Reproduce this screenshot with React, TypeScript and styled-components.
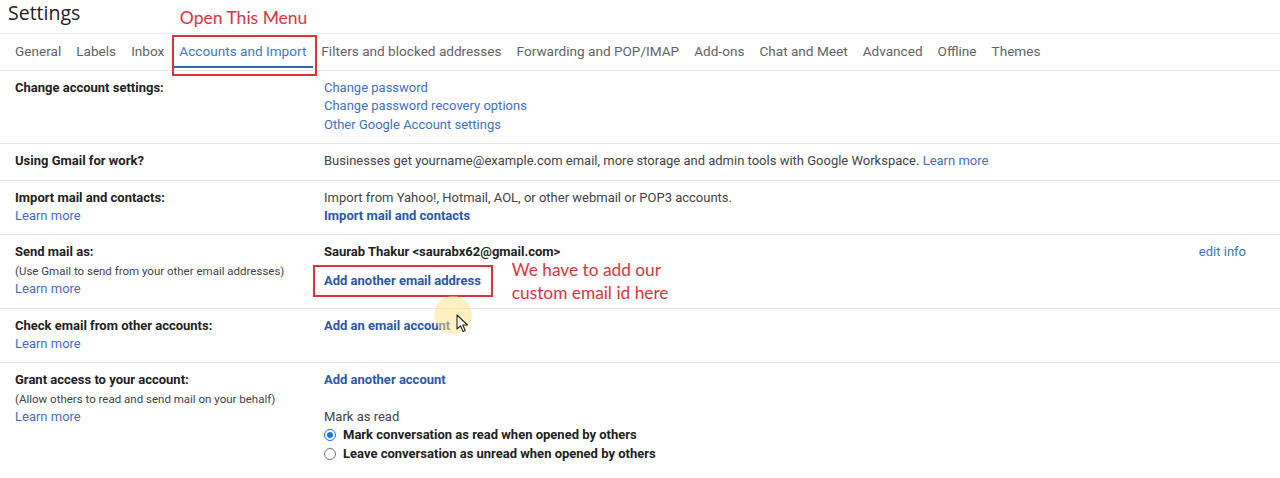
import React from "react";
import styled, { createGlobalStyle, css } from "styled-components";

const GlobalStyle = createGlobalStyle`
  html, body { margin: 0; padding: 0; background: #ffffff; }
  body { font-family: Roboto, "Liberation Sans", Arial, sans-serif; font-size: 13px; color: #222; }
  * { box-sizing: border-box; }
`;

const RED = "#d9343c";

const Page = styled.div`
  width: 1280px;
  height: 478px;
  overflow: hidden;
  background: #fff;
`;

const Header = styled.div`
  height: 34px;
  padding: 1px 0 0 8px;
  display: flex;
  align-items: flex-start;
  border-bottom: 1px solid #efefef;
`;

const Title = styled.h1`
  margin: 0;
  font-family: "Open Sans", Roboto, sans-serif;
  font-weight: 400;
  font-size: 19.5px;
  color: #202124;
  line-height: 24px;
`;

const TabBar = styled.nav`
  height: 37px;
  display: flex;
  padding: 0 0 2px 7.5px;
  border-bottom: 1px solid #e8e8e8;
`;

const Tab = styled.div<{ $active?: boolean }>`
  position: relative;
  display: flex;
  align-items: center;
  padding: 0 7.5px;
  font-family: Roboto, "Open Sans", sans-serif;
  font-size: 13.6px;
  color: #626366;
  white-space: nowrap;
  ${(p) =>
    p.$active &&
    css`
      color: #3f79c6;
      &::after {
        content: "";
        position: absolute;
        left: 2px;
        right: 1px;
        bottom: 0;
        height: 2px;
        background: #3366b0;
      }
    `}
`;

const CalloutBox = styled.span`
  position: absolute;
  left: 0;
  right: -3px;
  top: 1px;
  bottom: -8px;
  border: 2px solid ${RED};
  pointer-events: none;
`;

const CalloutText = styled.span`
  position: absolute;
  left: 8px;
  top: -27px;
  font-family: Lato, "Open Sans", sans-serif;
  font-size: 17.5px;
  color: ${RED};
  white-space: nowrap;
`;

const Row = styled.section<{ $last?: boolean }>`
  position: relative;
  display: grid;
  grid-template-columns: 309px 1fr auto;
  padding: 8px 34px 9px 15px;
  line-height: 18.4px;
  border-bottom: ${(p) => (p.$last ? "none" : "1px solid #e6e6e6")};
`;

const LabelCell = styled.div`
  display: flex;
  flex-direction: column;
`;

const Label = styled.span`
  font-weight: 700;
  color: #222;
`;

const Hint = styled.span`
  font-size: 11.5px;
  color: #444;
`;

const ValueCell = styled.div`
  display: flex;
  flex-direction: column;
  align-items: flex-start;
`;

const Text = styled.span<{ $bold?: boolean }>`
  color: ${(p) => (p.$bold ? "#222" : "#444")};
  font-weight: ${(p) => (p.$bold ? 700 : 400)};
`;

const Link = styled.a<{ $bold?: boolean }>`
  color: ${(p) => (p.$bold ? "#2b58a8" : "#4271c0")};
  font-weight: ${(p) => (p.$bold ? 700 : 400)};
  text-decoration: none;
  cursor: pointer;
`;

const ActionCell = styled.div`
  display: flex;
  flex-direction: column;
  align-items: flex-end;
`;

const CalloutRow = styled.div`
  display: flex;
  align-items: center;
  gap: 19px;
  margin-top: 3px;
  margin-left: -11px;
`;

const BoxedLink = styled.div`
  border: 2px solid ${RED};
  padding: 5px 10px 5px 9px;
  line-height: 18px;
`;

const Note = styled.div`
  font-family: Lato, "Open Sans", sans-serif;
  font-size: 17.3px;
  line-height: 23px;
  margin: -7px 0;
  color: ${RED};
`;

const Spacer = styled.div`
  height: 18px;
`;

const RadioLine = styled.label`
  display: flex;
  align-items: center;
  gap: 7px;
  font-weight: 700;
  color: #222;
`;

const Radio = styled.span<{ $checked?: boolean }>`
  width: 12px;
  height: 12px;
  border-radius: 50%;
  border: 1px solid ${(p) => (p.$checked ? "#1a73e8" : "#767676")};
  display: inline-flex;
  align-items: center;
  justify-content: center;
  background: #fff;
  ${(p) =>
    p.$checked &&
    css`
      &::after {
        content: "";
        width: 6px;
        height: 6px;
        border-radius: 50%;
        background: #1a73e8;
      }
    `}
`;

const Halo = styled.span`
  position: absolute;
  left: 434px;
  top: -13px;
  width: 38px;
  height: 38px;
  border-radius: 50%;
  background: rgba(253, 226, 130, 0.5);
  pointer-events: none;
`;

const Pointer = styled.svg`
  position: absolute;
  left: 456px;
  top: 5px;
  pointer-events: none;
`;

const tabs = [
  "General",
  "Labels",
  "Inbox",
  "Accounts and Import",
  "Filters and blocked addresses",
  "Forwarding and POP/IMAP",
  "Add-ons",
  "Chat and Meet",
  "Advanced",
  "Offline",
  "Themes",
];

export default function App() {
  return (
    <Page>
      <GlobalStyle />
      <Header>
        <Title>Settings</Title>
      </Header>
      <TabBar>
        {tabs.map((t) => {
          const active = t === "Accounts and Import";
          return (
            <Tab key={t} $active={active}>
              {t}
              {active && (
                <>
                  <CalloutBox />
                  <CalloutText>Open This Menu</CalloutText>
                </>
              )}
            </Tab>
          );
        })}
      </TabBar>

      <Row>
        <LabelCell>
          <Label>Change account settings:</Label>
        </LabelCell>
        <ValueCell>
          <Link>Change password</Link>
          <Link>Change password recovery options</Link>
          <Link>Other Google Account settings</Link>
        </ValueCell>
        <ActionCell />
      </Row>

      <Row>
        <LabelCell>
          <Label>Using Gmail for work?</Label>
        </LabelCell>
        <ValueCell>
          <Text>
            Businesses get yourname@example.com email, more storage and admin tools with Google
            Workspace. <Link>Learn more</Link>
          </Text>
        </ValueCell>
        <ActionCell />
      </Row>

      <Row>
        <LabelCell>
          <Label>Import mail and contacts:</Label>
          <Link>Learn more</Link>
        </LabelCell>
        <ValueCell>
          <Text>Import from Yahoo!, Hotmail, AOL, or other webmail or POP3 accounts.</Text>
          <Link $bold>Import mail and contacts</Link>
        </ValueCell>
        <ActionCell />
      </Row>

      <Row>
        <LabelCell>
          <Label>Send mail as:</Label>
          <Hint>(Use Gmail to send from your other email addresses)</Hint>
          <Link>Learn more</Link>
        </LabelCell>
        <ValueCell>
          <Text $bold>Saurab Thakur &lt;saurabx62@gmail.com&gt;</Text>
          <CalloutRow>
            <BoxedLink>
              <Link $bold>Add another email address</Link>
            </BoxedLink>
            <Note>
              We have to add our
              <br />
              custom email id here
            </Note>
          </CalloutRow>
        </ValueCell>
        <ActionCell>
          <Link>edit info</Link>
        </ActionCell>
      </Row>

      <Row>
        <LabelCell>
          <Label>Check email from other accounts:</Label>
          <Link>Learn more</Link>
        </LabelCell>
        <ValueCell>
          <Link $bold>Add an email account</Link>
        </ValueCell>
        <ActionCell />
        <Halo />
        <Pointer width="13" height="19" viewBox="0 0 13 19">
          <path
            d="M1 1 L1 15 L4.5 11.8 L7 17.5 L9.2 16.5 L6.8 11 L11.5 11 Z"
            fill="#fff"
            stroke="#222"
            strokeWidth="1.1"
            strokeLinejoin="round"
          />
        </Pointer>
      </Row>

      <Row $last>
        <LabelCell>
          <Label>Grant access to your account:</Label>
          <Hint>(Allow others to read and send mail on your behalf)</Hint>
          <Link>Learn more</Link>
        </LabelCell>
        <ValueCell>
          <Link $bold>Add another account</Link>
          <Spacer />
          <Text>Mark as read</Text>
          <RadioLine>
            <Radio $checked />
            Mark conversation as read when opened by others
          </RadioLine>
          <RadioLine>
            <Radio />
            Leave conversation as unread when opened by others
          </RadioLine>
        </ValueCell>
        <ActionCell />
      </Row>
    </Page>
  );
}
